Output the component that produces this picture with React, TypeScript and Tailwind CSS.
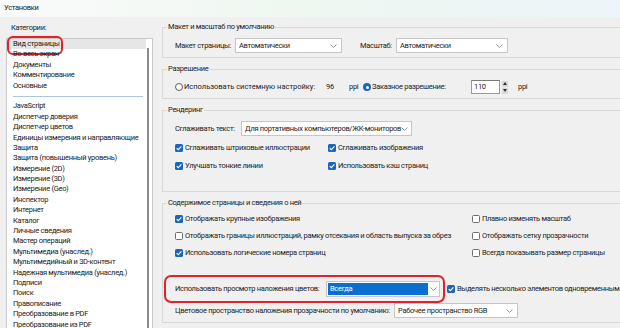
import React from 'react';

const categories = [
  'Вид страницы',
  'Во весь экран',
  'Документы',
  'Комментирование',
  'Основные',
  '-',
  'JavaScript',
  'Диспетчер доверия',
  'Диспетчер цветов',
  'Единицы измерения и направляющие',
  'Защита',
  'Защита (повышенный уровень)',
  'Измерение (2D)',
  'Измерение (3D)',
  'Измерение (Geo)',
  'Инспектор',
  'Интернет',
  'Каталог',
  'Личные сведения',
  'Мастер операций',
  'Мультимедиа (унаслед.)',
  'Мультимедийный и 3D-контент',
  'Надежная мультимедиа (унаслед.)',
  'Подписи',
  'Поиск',
  'Правописание',
  'Преобразование в PDF',
  'Преобразование из PDF',
];

const Chevron = () => (
  <svg width="7" height="4" viewBox="0 0 7 4" className="shrink-0">
    <path d="M0.5 0.5 L3.5 3.5 L6.5 0.5" fill="none" stroke="#8c8c8c" strokeWidth="0.9" />
  </svg>
);

const Checkbox = ({ checked }: { checked?: boolean }) =>
  checked ? (
    <span className="flex h-[8px] w-[8px] shrink-0 items-center justify-center rounded-[1.5px] bg-[#1a66bd]">
      <svg width="8" height="8" viewBox="0 0 8 8">
        <path d="M1.7 4.1 L3.3 5.7 L6.4 2.3" fill="none" stroke="white" strokeWidth="1.1" />
      </svg>
    </span>
  ) : (
    <span className="h-[8px] w-[8px] shrink-0 rounded-[1.5px] border border-[#6e6e6e] bg-white" />
  );

const Radio = ({ checked }: { checked?: boolean }) =>
  checked ? (
    <span className="flex h-[8px] w-[8px] shrink-0 items-center justify-center rounded-full bg-[#1a66bd]">
      <span className="h-[3px] w-[3px] rounded-full bg-white" />
    </span>
  ) : (
    <span className="h-[8px] w-[8px] shrink-0 rounded-full border border-[#5f5f5f] bg-white" />
  );

const Select = ({ value, className }: { value: string; className: string }) => (
  <div className={`flex shrink-0 items-center justify-between border border-[#c6c6c6] bg-white pl-[3px] pr-[4px] ${className}`}>
    <span>{value}</span>
    <Chevron />
  </div>
);

const Check = ({ checked, label, className = '' }: { checked?: boolean; label: string; className?: string }) => (
  <div className={`flex shrink-0 items-center ${className}`}>
    <Checkbox checked={checked} />
    <span className="ml-[2px]">{label}</span>
  </div>
);

const Group = ({ title, children, className = '' }: { title: string; children: React.ReactNode; className?: string }) => (
  <fieldset className={`w-[470px] border border-[#d8d8d8] ${className}`}>
    <legend className="ml-[4px] px-[1px] leading-[10px]">{title}</legend>
    <div className="pl-[12px]">{children}</div>
  </fieldset>
);

export default function App() {
  return (
    <div className="h-[328px] w-[620px] overflow-hidden whitespace-nowrap bg-[#f0f0f0] font-['Roboto',Arial,sans-serif] text-[7.5px] tracking-[-0.3px] text-[#222]">
      <div className="h-[17px] bg-gradient-to-r from-[#fafbfb] via-[#eef7f0] to-[#ecf5f9] pl-[4px] pt-[3px] leading-[10px]">
        Установки
      </div>

      <div className="flex">
        {/* categories */}
        <div className="w-[162px] shrink-0 pl-[6px]">
          <div className="pl-[5px] pt-[6px] leading-[10px]">Категории:</div>
          <div className="mt-[5px] flex w-[147px] border border-[#c9c9c9] bg-white">
            <div className="w-[139px]">
              {categories.map((c, i) =>
                c === '-' ? (
                  <div key={i} className="flex h-[10.4px] items-center pl-[6px] pr-[3px]">
                    <div className="h-px w-full bg-[#a9c8e6]" />
                  </div>
                ) : (
                  <div
                    key={i}
                    className={`relative h-[10.4px] pl-[6px] leading-[10.4px] ${i === 0 ? 'bg-[#e6e6e6]' : ''}`}
                  >
                    {c}
                    {i === 0 && (
                      <span className="absolute left-0 top-[-3px] h-[19px] w-[56px] rounded-[6px] border-2 border-[#e0232a]" />
                    )}
                  </div>
                )
              )}
            </div>
            <div className="w-[6px]">
              <div className="ml-[1px] mt-[9px] h-[300px] w-[2px] bg-[#8a8a8a]" />
            </div>
          </div>
        </div>

        {/* settings */}
        <div className="flex-1 overflow-hidden pt-[5px]">
          <Group title="Макет и масштаб по умолчанию">
            <div className="mb-[4px] mt-[6px] flex h-[15px] items-center">
              <span className="w-[60px] shrink-0">Макет страницы:</span>
              <Select value="Автоматически" className="h-[15px] w-[107px]" />
              <span className="ml-[18px] w-[36px] shrink-0">Масштаб:</span>
              <Select value="Автоматически" className="h-[15px] w-[112px]" />
            </div>
          </Group>

          <Group title="Разрешение" className="mt-[6px]">
            <div className="mb-[4px] mt-[6px] flex h-[14px] items-center">
              <div className="flex w-[151px] shrink-0 items-center">
                <Radio />
                <span className="ml-[1px] tracking-[0px]">Использовать системную настройку:</span>
              </div>
              <span className="w-[23px] shrink-0">96</span>
              <span className="w-[14px] shrink-0">ppi</span>
              <div className="flex w-[108px] shrink-0 items-center">
                <Radio checked />
                <span className="ml-[1px]">Заказное разрешение:</span>
              </div>
              <div className="flex h-[14px] w-[29px] shrink-0 items-center border border-[#9a9a9a] border-t-[#7a7a7a] bg-white pl-[2px]">110</div>
              <div className="ml-[2px] flex h-[13px] w-[6px] flex-col justify-between">
                <div className="flex h-[6px] items-center justify-center bg-[#dadada]">
                  <svg width="4" height="3" viewBox="0 0 4 3"><path d="M0 3 L2 0 L4 3 Z" fill="#333" /></svg>
                </div>
                <div className="flex h-[6px] items-center justify-center bg-[#dadada]">
                  <svg width="4" height="3" viewBox="0 0 4 3"><path d="M0 0 L2 3 L4 0 Z" fill="#333" /></svg>
                </div>
              </div>
              <span className="ml-[10px]">ppi</span>
            </div>
          </Group>

          <Group title="Рендеринг" className="mt-[6px]">
            <div className="mt-[6px] flex h-[15px] items-center">
              <span className="w-[66px] shrink-0">Сглаживать текст:</span>
              <Select value="Для портативных компьютеров/ЖК-мониторов" className="h-[15px] w-[171px]" />
            </div>
            <div className="mt-[6px] flex h-[12px] items-center">
              <Check checked label="Сглаживать штриховые иллюстрации" className="w-[153px]" />
              <Check checked label="Сглаживать изображения" />
            </div>
            <div className="mb-[19px] mt-[6px] flex h-[12px] items-center">
              <Check checked label="Улучшать тонкие линии" className="w-[153px]" />
              <Check checked label="Использовать кэш страниц" />
            </div>
          </Group>

          <Group title="Содержимое страницы и сведения о ней" className="mt-[6px]">
            <div className="mt-[5px] flex h-[12px] items-center">
              <Check checked label="Отображать крупные изображения" className="w-[297px]" />
              <Check label="Плавно изменять масштаб" />
            </div>
            <div className="mt-[5px] flex h-[12px] items-center">
              <Check label="Отображать границы иллюстраций, рамку отсекания и область выпуска за обрез" className="w-[297px]" />
              <Check label="Отображать сетку прозрачности" />
            </div>
            <div className="mt-[5px] flex h-[12px] items-center">
              <Check checked label="Использовать логические номера страниц" className="w-[297px]" />
              <Check label="Всегда показывать размер страницы" />
            </div>
            <div className="relative mt-[22px] flex h-[16px] items-center">
              <span className="w-[151px] shrink-0">Использовать просмотр наложения цветов:</span>
              <div className="flex h-[16px] w-[114px] shrink-0 items-center border border-[#c6c6c6] bg-white p-[1px]">
                <div className="flex h-full w-[100px] items-center bg-[#0a6fd0] pl-[2px] text-white">Всегда</div>
                <div className="flex flex-1 justify-center">
                  <Chevron />
                </div>
              </div>
              <Check checked label="Выделять несколько элементов одновременным нажатием" className="ml-[7px]" />
              <span className="absolute left-[-11px] top-[-6px] h-[28px] w-[281px] rounded-[7px] border-2 border-[#e0232a]" />
            </div>
            <div className="mb-[4px] mt-[6px] flex h-[15px] items-center">
              <span className="w-[219px] shrink-0">Цветовое пространство наложения прозрачности по умолчанию:</span>
              <Select value="Рабочее пространство RGB" className="h-[15px] w-[124px]" />
            </div>
          </Group>
        </div>
      </div>
    </div>
  );
}
